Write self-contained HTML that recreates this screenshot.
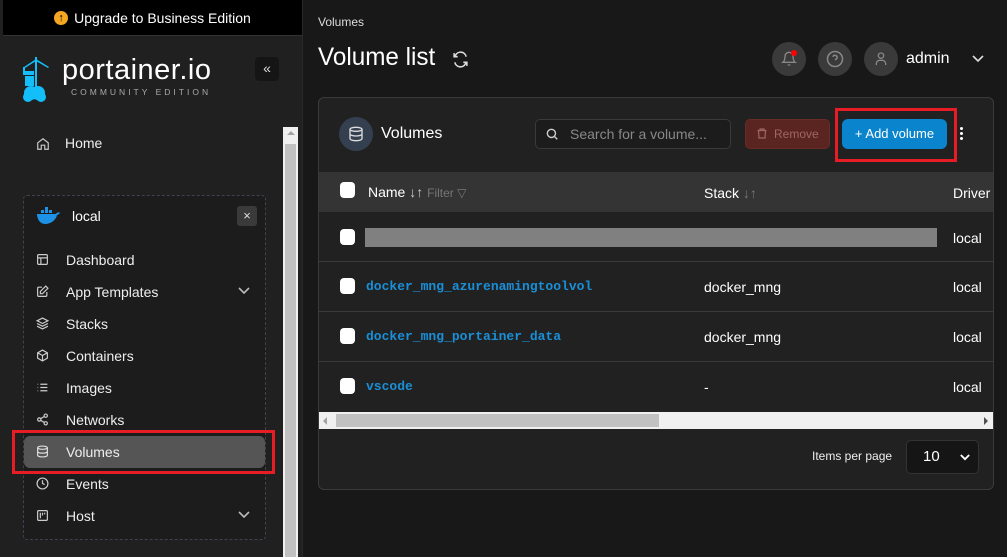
<!DOCTYPE html>
<html><head><meta charset="utf-8"><style>
*{box-sizing:border-box;margin:0;padding:0}
body{width:1007px;height:557px;overflow:hidden;background:#181818;font-family:"Liberation Sans",sans-serif;color:#fff;position:relative}
.abs{position:absolute}
.side{left:0;top:0;width:303px;height:557px;background:#202020;border-right:1px solid #2a2a2a}
.banner{left:3px;top:0;width:299px;height:36px;background:#000;border-bottom:1px solid #333;font-size:14px;display:flex;align-items:center;justify-content:center;gap:6px}
.nav{font-size:14px;color:#eee}
.nav svg{position:absolute;left:36px;top:3px}
.item{position:absolute;left:0;width:260px;height:20px}
.item span{position:absolute;left:66px;top:2px}
.chev{position:absolute;left:238px;top:4px}
.cb{position:absolute;width:15px;height:16px;background:#fff;border-radius:4px}
.mono{font-family:"Liberation Mono",monospace;color:#1a8fd8;font-size:13px;font-weight:bold}
.row{position:absolute;left:319px;width:674px;height:50px;border-bottom:1px solid #3a3a3a}
.t{position:absolute;font-size:14px}
</style></head><body>
<div class="abs side"></div>
<div class="abs banner"><span style="width:14px;height:14px;border-radius:50%;background:#f5a623;display:inline-flex;align-items:center;justify-content:center;color:#000;font-size:11px;font-weight:bold">↑</span>Upgrade to Business Edition</div>
<svg class="abs" style="left:22px;top:57px" width="34" height="46" viewBox="0 0 34 46"><g fill="#13bef9"><rect x="13" y="0" width="2" height="30"/><path d="M2 10 L14 2 L27 10 L26 11 L14 4 L3 11Z"/><rect x="1" y="10" width="2" height="8"/><rect x="3" y="14" width="9" height="4"/><rect x="3" y="19" width="9" height="5"/><rect x="3" y="24" width="9" height="5"/><circle cx="9" cy="36" r="7"/><circle cx="16" cy="36" r="7"/><circle cx="6" cy="40" r="5"/><circle cx="19" cy="40" r="5"/></g></svg>
<div class="abs" style="left:62px;top:54px;font-size:29px;color:#fff;letter-spacing:0.5px">portainer.io</div>
<div class="abs" style="left:71px;top:87px;font-size:8.5px;color:#aaa;letter-spacing:3px">COMMUNITY EDITION</div>
<div class="abs" style="left:255px;top:57px;width:24px;height:24px;background:#151515;border-radius:4px;color:#ddd;font-size:14px;text-align:center;line-height:22px">«</div>
<div class="abs" style="left:283px;top:127px;width:15px;height:430px;background:#f0f0f0"></div>
<div class="abs" style="left:285px;top:144px;width:11px;height:413px;background:#c1c1c1"></div>
<div class="abs" style="left:287px;top:131px;width:0;height:0;border:4px solid transparent;border-bottom-color:#a3a3a3;border-top:0"></div>
<div class="abs nav" style="left:0;top:135px;width:260px;height:20px">
<svg width="14" height="14" viewBox="0 0 24 24" fill="none" stroke="#ccc" stroke-width="2" style="top:2px"><path d="M3 10l9-7 9 7v11H15v-7H9v7H3z"/></svg>
<span style="position:absolute;left:65px;top:0">Home</span></div>
<div class="abs" style="left:23px;top:195px;width:243px;height:345px;border:1px dashed #3d4450;border-radius:4px;background:#1c1c1c"></div>
<svg class="abs" style="left:36px;top:207px" width="24" height="18" viewBox="0 0 24 18"><g fill="#1d91e6"><rect x="5" y="3" width="3" height="3"/><rect x="9" y="3" width="3" height="3"/><rect x="9" y="0" width="3" height="3"/><rect x="13" y="3" width="3" height="3"/><path d="M1 7h19c1-2 3-2 4-1-1 1-2 2-3 2-1 5-6 9-12 9C4 17 1 12 1 7z"/></g></svg>
<div class="abs" style="left:72px;top:208px;font-size:14px">local</div>
<div class="abs" style="left:237px;top:206px;width:20px;height:20px;background:#3a3a3a;border-radius:3px;color:#ddd;font-size:13px;text-align:center;line-height:20px">×</div>
<div class="abs" style="left:24px;top:436px;width:241px;height:32px;background:#555;border-radius:6px"></div>
<div class="abs" style="left:12px;top:430px;width:263px;height:44px;border:3px solid #e81c24"></div>
<div class="nav">
<div class="item" style="top:250px"><svg width="13" height="13" viewBox="0 0 24 24" fill="none" stroke="#ccc" stroke-width="2.2"><rect x="3" y="3" width="18" height="18" rx="2"/><path d="M3 9h18M9 9v12"/></svg><span>Dashboard</span></div>
<div class="item" style="top:282px"><svg width="13" height="13" viewBox="0 0 24 24" fill="none" stroke="#ccc" stroke-width="2.2"><path d="M11 4H5a2 2 0 0 0-2 2v13a2 2 0 0 0 2 2h13a2 2 0 0 0 2-2v-6"/><path d="M18 2l4 4-10 10H8v-4z"/></svg><span>App Templates</span><svg class="chev" style="left:238px;top:5px" width="12" height="8" viewBox="0 0 12 8" fill="none" stroke="#bbb" stroke-width="1.6"><path d="M1 1l5 5 5-5"/></svg></div>
<div class="item" style="top:314px"><svg width="13" height="13" viewBox="0 0 24 24" fill="none" stroke="#ccc" stroke-width="2.2"><path d="M12 2l10 5-10 5L2 7z M2 12l10 5 10-5 M2 17l10 5 10-5"/></svg><span>Stacks</span></div>
<div class="item" style="top:346px"><svg width="13" height="13" viewBox="0 0 24 24" fill="none" stroke="#ccc" stroke-width="2.2"><path d="M12 2l9 5v10l-9 5-9-5V7z M3 7l9 5 9-5 M12 12v10"/></svg><span>Containers</span></div>
<div class="item" style="top:378px"><svg width="13" height="13" viewBox="0 0 24 24" fill="none" stroke="#ccc" stroke-width="2.2"><path d="M8 6h13M8 12h13M8 18h13M3 6h1M3 12h1M3 18h1"/></svg><span>Images</span></div>
<div class="item" style="top:410px"><svg width="13" height="13" viewBox="0 0 24 24" fill="none" stroke="#ccc" stroke-width="2.2"><circle cx="18" cy="5" r="3"/><circle cx="6" cy="12" r="3"/><circle cx="18" cy="19" r="3"/><path d="M8.6 13.5l6.8 4M15.4 6.5l-6.8 4"/></svg><span>Networks</span></div>
<div class="item" style="top:442px"><svg width="13" height="13" viewBox="0 0 24 24" fill="none" stroke="#ddd" stroke-width="2.2"><ellipse cx="12" cy="5" rx="9" ry="3"/><path d="M3 5v14c0 1.7 4 3 9 3s9-1.3 9-3V5M3 12c0 1.7 4 3 9 3s9-1.3 9-3"/></svg><span>Volumes</span></div>
<div class="item" style="top:474px"><svg width="13" height="13" viewBox="0 0 24 24" fill="none" stroke="#ccc" stroke-width="2.2"><circle cx="12" cy="12" r="10"/><path d="M12 6v6l4 2"/></svg><span>Events</span></div>
<div class="item" style="top:506px"><svg width="13" height="13" viewBox="0 0 24 24" fill="none" stroke="#ccc" stroke-width="2.2"><rect x="3" y="3" width="18" height="18" rx="2"/><path d="M8 7v10M12 7v5M16 7v3"/></svg><span>Host</span><svg class="chev" style="left:238px;top:5px" width="12" height="8" viewBox="0 0 12 8" fill="none" stroke="#bbb" stroke-width="1.6"><path d="M1 1l5 5 5-5"/></svg></div>
</div>
<div class="abs" style="left:318px;top:15px;font-size:12px;color:#ddd">Volumes</div>
<div class="abs" style="left:318px;top:43px;font-size:25px;transform:scaleX(0.97);transform-origin:left">Volume list</div>
<svg class="abs" style="left:452px;top:51px" width="17" height="17" viewBox="0 0 24 24" fill="none" stroke="#ddd" stroke-width="2.2"><path d="M20 8A8 8 0 0 0 5 6L3 8M3 3v5h5M4 16a8 8 0 0 0 15 2l2-2M21 21v-5h-5"/></svg>
<div class="abs" style="left:772px;top:42px;width:34px;height:34px;border-radius:50%;background:#3a3a3a"></div>
<svg class="abs" style="left:781px;top:50px" width="16" height="18" viewBox="0 0 24 24" fill="none" stroke="#888" stroke-width="2"><path d="M6 8a6 6 0 0 1 12 0c0 7 3 9 3 9H3s3-2 3-9M10 21h4"/></svg>
<div class="abs" style="left:791px;top:50px;width:6px;height:6px;border-radius:50%;background:#f00"></div>
<div class="abs" style="left:818px;top:42px;width:34px;height:34px;border-radius:50%;background:#3a3a3a"></div>
<svg class="abs" style="left:826px;top:50px" width="18" height="18" viewBox="0 0 24 24" fill="none" stroke="#888" stroke-width="2"><circle cx="12" cy="12" r="10"/><path d="M9.1 9a3 3 0 0 1 5.8 1c0 2-3 3-3 3M12 17h.01"/></svg>
<div class="abs" style="left:864px;top:42px;width:34px;height:34px;border-radius:50%;background:#3a3a3a"></div>
<svg class="abs" style="left:873px;top:50px" width="16" height="18" viewBox="0 0 24 24" fill="none" stroke="#888" stroke-width="2"><circle cx="12" cy="7" r="4"/><path d="M5 21v-2a5 5 0 0 1 5-5h4a5 5 0 0 1 5 5v2"/></svg>
<div class="abs" style="left:906px;top:50px;font-size:16px">admin</div>
<svg class="abs" style="left:972px;top:55px" width="12" height="8" viewBox="0 0 12 8" fill="none" stroke="#ddd" stroke-width="1.6"><path d="M1 1l5 5 5-5"/></svg>
<div class="abs" style="left:318px;top:97px;width:676px;height:393px;background:#212121;border:1px solid #3a3a3a;border-radius:6px"></div>
<div class="abs" style="left:339px;top:117px;width:34px;height:34px;border-radius:50%;background:#34404f"></div>
<svg class="abs" style="left:348px;top:126px" width="16" height="16" viewBox="0 0 24 24" fill="none" stroke="#ddd" stroke-width="2"><ellipse cx="12" cy="5" rx="9" ry="3"/><path d="M3 5v14c0 1.7 4 3 9 3s9-1.3 9-3V5M3 12c0 1.7 4 3 9 3s9-1.3 9-3"/></svg>
<div class="abs" style="left:381px;top:125px;font-size:16px">Volumes</div>
<div class="abs" style="left:535px;top:119px;width:196px;height:30px;border:1px solid #3a3a3a;border-radius:5px;background:#1c1c1c"></div>
<svg class="abs" style="left:545px;top:127px" width="14" height="14" viewBox="0 0 24 24" fill="none" stroke="#ccc" stroke-width="2.4"><circle cx="11" cy="11" r="7"/><path d="M21 21l-5-5"/></svg>
<div class="abs" style="left:570px;top:126px;font-size:14px;color:#888">Search for a volume...</div>
<div class="abs" style="left:745px;top:119px;width:85px;height:30px;border:1px solid #6a2a26;border-radius:5px;background:#5a2420;color:#a06660;font-size:12px;line-height:28px;padding-left:28px">Remove</div>
<svg class="abs" style="left:756px;top:127px" width="12" height="13" viewBox="0 0 24 24" fill="none" stroke="#a06660" stroke-width="2.4"><path d="M3 6h18M8 6V3h8v3M5 6l1 15h12l1-15"/></svg>
<div class="abs" style="left:842px;top:119px;width:105px;height:30px;border-radius:6px;background:#0a84cc;font-size:13px;line-height:30px;text-align:center">+ Add volume</div>
<div class="abs" style="left:835px;top:108px;width:122px;height:54px;border:3px solid #e81c24"></div>
<div class="abs" style="left:960px;top:127px;width:3px;height:3px;background:#fff;border-radius:50%"></div>
<div class="abs" style="left:960px;top:132px;width:3px;height:3px;background:#fff;border-radius:50%"></div>
<div class="abs" style="left:960px;top:137px;width:3px;height:3px;background:#fff;border-radius:50%"></div>
<div class="abs" style="left:319px;top:172px;width:674px;height:40px;background:#343434"></div>
<div class="cb" style="left:340px;top:182px"></div>
<div class="t" style="left:368px;top:184px">Name <span style="color:#ccc">↓↑</span> <span style="font-size:12px;color:#777">Filter ▽</span></div>
<div class="t" style="left:704px;top:185px">Stack <span style="color:#777">↓↑</span></div>
<div class="t" style="left:953px;top:185px">Driver</div>
<div class="row" style="top:212px"><div class="cb" style="left:21px;top:17px"></div><div class="abs" style="left:46px;top:16px;width:572px;height:19px;background:#808080"></div><div class="t" style="left:634px;top:18px">local</div></div>
<div class="row" style="top:262px"><div class="cb" style="left:21px;top:16px"></div><div class="abs mono" style="left:47px;top:17px">docker_mng_azurenamingtoolvol</div><div class="t" style="left:385px;top:17px">docker_mng</div><div class="t" style="left:634px;top:17px">local</div></div>
<div class="row" style="top:312px"><div class="cb" style="left:21px;top:16px"></div><div class="abs mono" style="left:47px;top:17px">docker_mng_portainer_data</div><div class="t" style="left:385px;top:17px">docker_mng</div><div class="t" style="left:634px;top:17px">local</div></div>
<div class="row" style="top:362px;border:none"><div class="cb" style="left:21px;top:16px"></div><div class="abs mono" style="left:47px;top:17px">vscode</div><div class="t" style="left:385px;top:17px">-</div><div class="t" style="left:634px;top:17px">local</div></div>
<div class="abs" style="left:319px;top:412px;width:674px;height:17px;background:#f0f0f0"></div>
<div class="abs" style="left:336px;top:414px;width:323px;height:13px;background:#c1c1c1"></div>
<div class="abs" style="left:323px;top:417px;border:4px solid transparent;border-right-color:#a3a3a3;border-left:0"></div>
<div class="abs" style="left:984px;top:417px;border:4px solid transparent;border-left-color:#505050;border-right:0"></div>
<div class="abs" style="left:812px;top:449px;font-size:12px;color:#eee">Items per page</div>
<div class="abs" style="left:906px;top:440px;width:73px;height:34px;background:#151515;border:1px solid #333;border-radius:5px;font-size:15px;line-height:32px;padding-left:16px">10<svg style="position:absolute;right:8px;top:13px" width="10" height="7" viewBox="0 0 12 8" fill="none" stroke="#fff" stroke-width="2.2"><path d="M1 1l5 5 5-5"/></svg></div>
</body></html>
